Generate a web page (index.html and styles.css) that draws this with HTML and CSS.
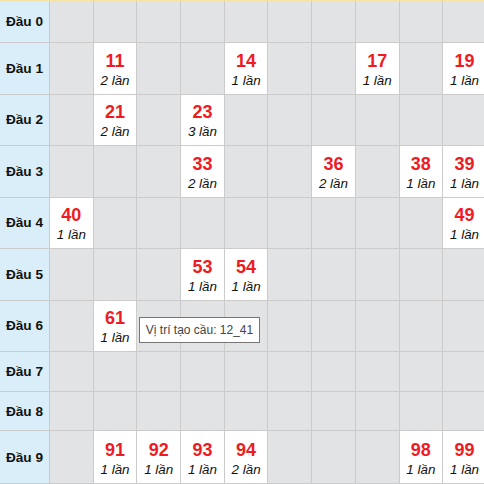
FILE: index.html
```html
<!DOCTYPE html>
<html lang="vi">
<head>
<meta charset="utf-8">
<title>Cầu</title>
<link rel="stylesheet" href="styles.css">
</head>
<body>
<div class="board">
  <div class="lbl">Đầu 0</div><div class="c"></div><div class="c"></div><div class="c"></div><div class="c"></div><div class="c"></div><div class="c"></div><div class="c"></div><div class="c"></div><div class="c"></div><div class="c"></div>
  <div class="lbl">Đầu 1</div><div class="c"></div><div class="c f"><b>11</b><i>2 lần</i></div><div class="c"></div><div class="c"></div><div class="c f"><b>14</b><i>1 lần</i></div><div class="c"></div><div class="c"></div><div class="c f"><b>17</b><i>1 lần</i></div><div class="c"></div><div class="c f"><b>19</b><i>1 lần</i></div>
  <div class="lbl">Đầu 2</div><div class="c"></div><div class="c f"><b>21</b><i>2 lần</i></div><div class="c"></div><div class="c f"><b>23</b><i>3 lần</i></div><div class="c"></div><div class="c"></div><div class="c"></div><div class="c"></div><div class="c"></div><div class="c"></div>
  <div class="lbl">Đầu 3</div><div class="c"></div><div class="c"></div><div class="c"></div><div class="c f"><b>33</b><i>2 lần</i></div><div class="c"></div><div class="c"></div><div class="c f"><b>36</b><i>2 lần</i></div><div class="c"></div><div class="c f"><b>38</b><i>1 lần</i></div><div class="c f"><b>39</b><i>1 lần</i></div>
  <div class="lbl">Đầu 4</div><div class="c f"><b>40</b><i>1 lần</i></div><div class="c"></div><div class="c"></div><div class="c"></div><div class="c"></div><div class="c"></div><div class="c"></div><div class="c"></div><div class="c"></div><div class="c f"><b>49</b><i>1 lần</i></div>
  <div class="lbl">Đầu 5</div><div class="c"></div><div class="c"></div><div class="c"></div><div class="c f"><b>53</b><i>1 lần</i></div><div class="c f"><b>54</b><i>1 lần</i></div><div class="c"></div><div class="c"></div><div class="c"></div><div class="c"></div><div class="c"></div>
  <div class="lbl">Đầu 6</div><div class="c"></div><div class="c f"><b>61</b><i>1 lần</i></div><div class="c"></div><div class="c"></div><div class="c"></div><div class="c"></div><div class="c"></div><div class="c"></div><div class="c"></div><div class="c"></div>
  <div class="lbl">Đầu 7</div><div class="c"></div><div class="c"></div><div class="c"></div><div class="c"></div><div class="c"></div><div class="c"></div><div class="c"></div><div class="c"></div><div class="c"></div><div class="c"></div>
  <div class="lbl">Đầu 8</div><div class="c"></div><div class="c"></div><div class="c"></div><div class="c"></div><div class="c"></div><div class="c"></div><div class="c"></div><div class="c"></div><div class="c"></div><div class="c"></div>
  <div class="lbl">Đầu 9</div><div class="c"></div><div class="c f"><b>91</b><i>1 lần</i></div><div class="c f"><b>92</b><i>1 lần</i></div><div class="c f"><b>93</b><i>1 lần</i></div><div class="c f"><b>94</b><i>2 lần</i></div><div class="c"></div><div class="c"></div><div class="c"></div><div class="c f"><b>98</b><i>1 lần</i></div><div class="c f"><b>99</b><i>1 lần</i></div>
  <div class="tip">Vị trí tạo cầu: 12_41</div>
</div>
</body>
</html>
```
FILE: styles.css
```css
html, body {
  margin: 0;
  padding: 0;
  width: 484px;
  height: 484px;
  overflow: hidden;
  background: #ffffff;
}
.board {
  position: relative;
  display: grid;
  grid-template-columns: 49px repeat(10, 42.7px);
  grid-template-rows: 41px repeat(6, 50.5px) 39px 38px 52px;
  gap: 1px;
  background: #cbcbcb;
  border-top: 1px solid #f4e2a6;
  padding-bottom: 1px;
  width: 486px;
  font-family: "Liberation Sans", Arial, sans-serif;
}
.lbl {
  background: #d9eef8;
  display: flex;
  align-items: center;
  justify-content: center;
  font-weight: bold;
  font-size: 13.6px;
  color: #111;
}
.c {
  background: #e2e3e5;
}
.c.f {
  background: #ffffff;
  display: flex;
  flex-direction: column;
  align-items: center;
  justify-content: center;
  padding-top: 3px;
  box-sizing: border-box;
}
.c.f b {
  color: #ed1c24;
  font-size: 18px;
  line-height: 21px;
  font-weight: bold;
}
.c.f i {
  font-size: 13.4px;
  line-height: 17px;
  color: #111;
}
.tip {
  position: absolute;
  left: 139px;
  top: 316px;
  width: 119px;
  height: 24px;
  background: #ffffff;
  border: 1px solid #767676;
  font-size: 12px;
  color: #444;
  display: flex;
  align-items: center;
  justify-content: center;
  white-space: nowrap;
}
```
